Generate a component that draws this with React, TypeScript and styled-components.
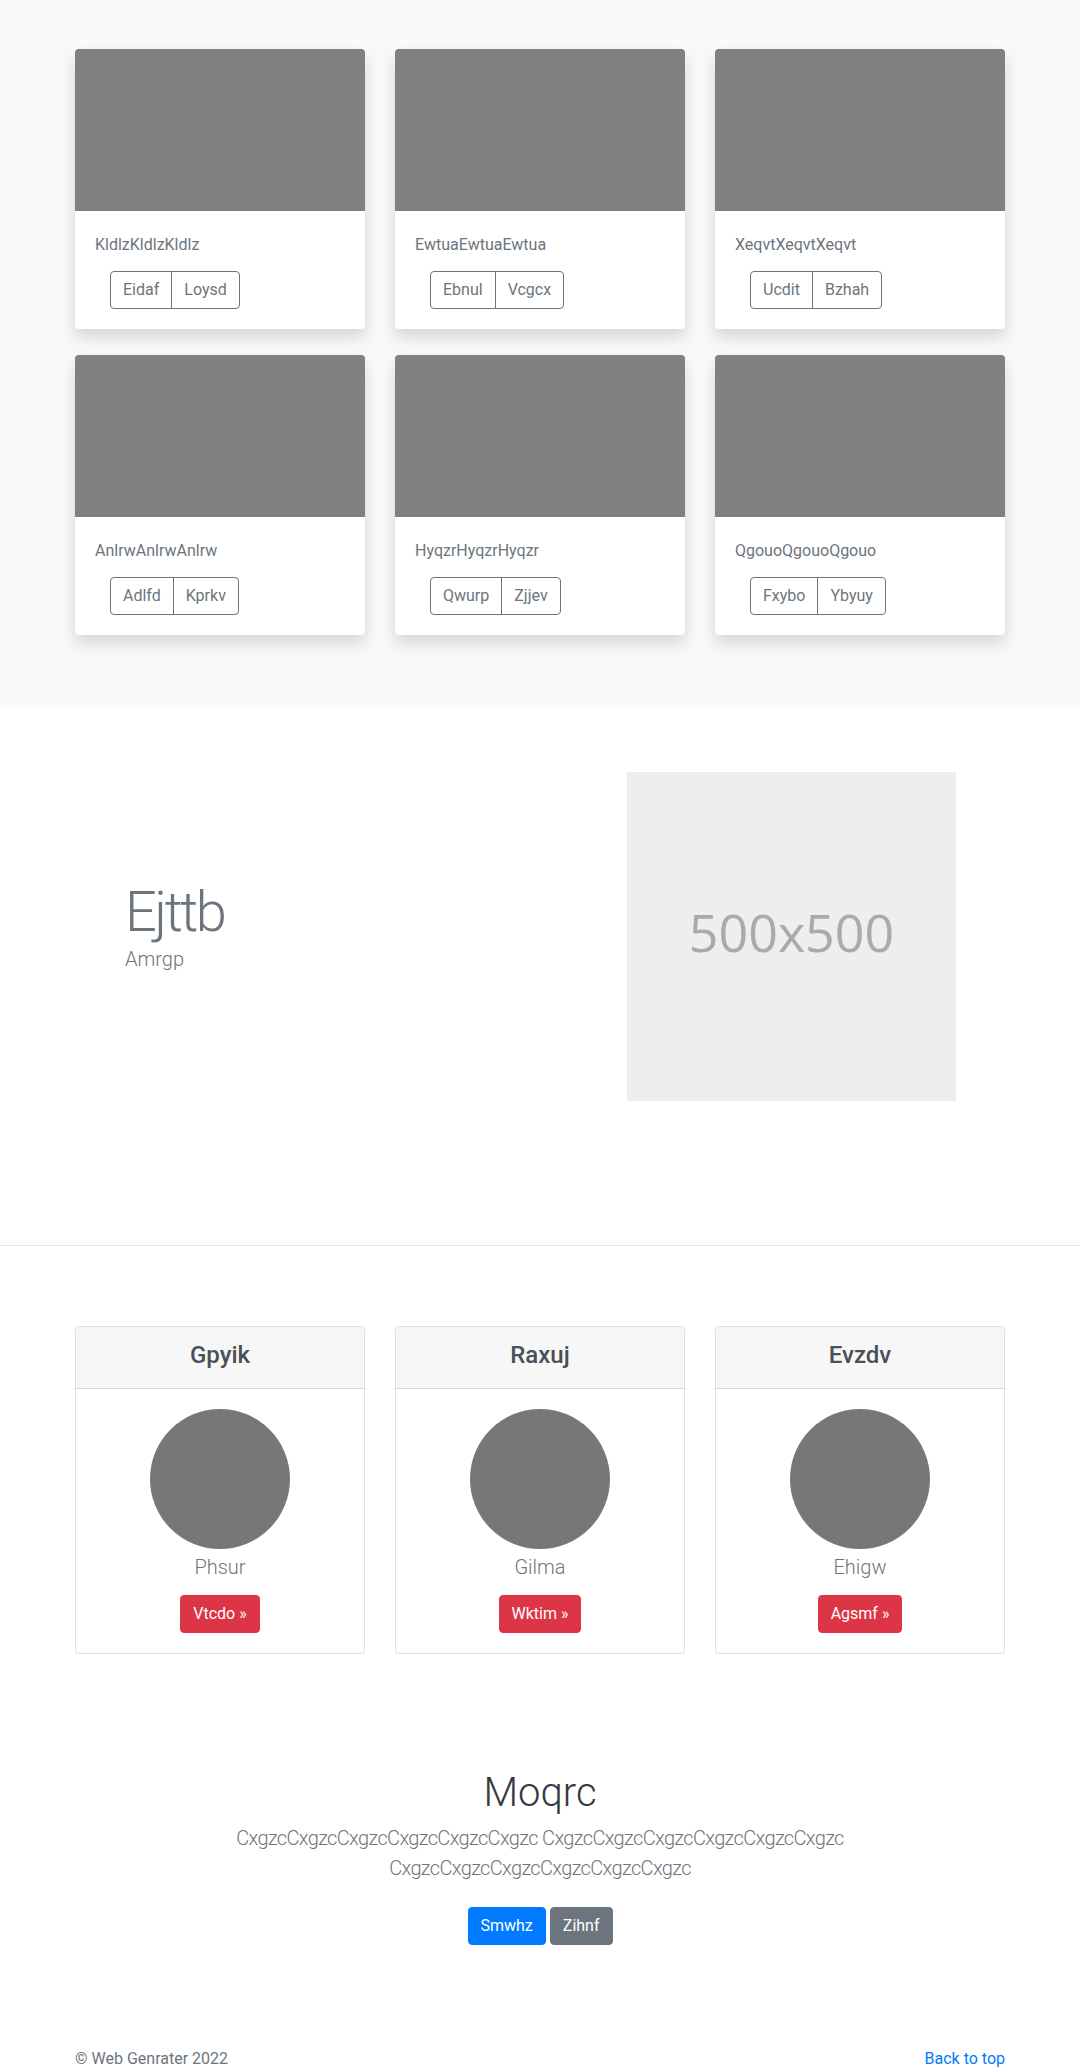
import React from "react";
import styled, { createGlobalStyle } from "styled-components";

const FONT = `Roboto, "Helvetica Neue", Arial, "Noto Sans", "Liberation Sans", sans-serif`;

const GlobalStyle = createGlobalStyle`
  *, *::before, *::after { box-sizing: border-box; }
  html, body { margin: 0; padding: 0; }
  body {
    font-family: ${FONT};
    font-size: 16px;
    line-height: 1.5;
    color: #212529;
    background: #fff;
  }
`;

const Container = styled.div`
  width: 930px;
  margin: 0 auto;
`;

/* ---------- Album section ---------- */
const AlbumSection = styled.section`
  background: #f8f9fa;
  padding: 49px 0 72px;
`;

const CardGrid = styled.div`
  display: grid;
  grid-template-columns: repeat(3, 290px);
  column-gap: 30px;
  row-gap: 26px;
`;

const ProductCard = styled.div`
  background: #fff;
  border-radius: 4px;
  box-shadow: 0 8px 16px rgba(0, 0, 0, 0.15);
  overflow: hidden;
  display: flex;
  flex-direction: column;
`;

const Thumb = styled.div`
  height: 162px;
  background: #808080;
`;

const CardBody = styled.div`
  padding: 20px;
`;

const CardText = styled.p`
  margin: 0 0 14px;
  padding-top: 2px;
  font-size: 16px;
  line-height: 24px;
  color: #6c757d;
`;

const BtnGroup = styled.div`
  display: inline-flex;
  margin-left: 15px;
`;

const OutlineBtn = styled.button<{ $first?: boolean }>`
  font-family: ${FONT};
  font-size: 16px;
  line-height: 24px;
  padding: 6px 12px;
  background: transparent;
  color: #6c757d;
  border: 1px solid #6c757d;
  border-radius: ${(p) => (p.$first ? "4px 0 0 4px" : "0 4px 4px 0")};
  margin-left: ${(p) => (p.$first ? "0" : "-1px")};
  cursor: pointer;
`;

/* ---------- Feature section ---------- */
const FeatureSection = styled.section`
  padding: 65px 0 144px;
  border-bottom: 1px solid #e5e5e5;
`;

const FeatureRow = styled.div`
  display: grid;
  grid-template-columns: 450px 450px;
  column-gap: 30px;
  padding: 0 15px;
`;

const FeatureText = styled.div`
  padding: 110px 0 0 35px;
`;

const DisplayTitle = styled.h1`
  margin: 0;
  font-size: 56px;
  font-weight: 300;
  line-height: 1.1;
  letter-spacing: -2.5px;
  color: #6c757d;
`;

const FeatureLead = styled.p`
  margin: 0;
  font-size: 20px;
  font-weight: 300;
  line-height: 30px;
  color: #6c757d;
`;

const Placeholder = styled.div`
  width: 329px;
  height: 329px;
  margin-left: 57px;
  padding-bottom: 10px;
  background: #eeeeee;
  color: #aaaaaa;
  font-family: "Open Sans", "Noto Sans", sans-serif;
  font-size: 52px;
  display: flex;
  align-items: center;
  justify-content: center;
`;

/* ---------- Team / pricing section ---------- */
const TeamSection = styled.section`
  padding: 80px 0 113px;
`;

const TeamGrid = styled.div`
  display: grid;
  grid-template-columns: repeat(3, 290px);
  column-gap: 30px;
`;

const TeamCard = styled.div`
  border: 1px solid rgba(0, 0, 0, 0.125);
  border-radius: 4px;
  overflow: hidden;
  text-align: center;
`;

const TeamHeader = styled.div`
  background: rgba(0, 0, 0, 0.03);
  border-bottom: 1px solid rgba(0, 0, 0, 0.125);
  padding: 12px 20px;
`;

const TeamName = styled.h4`
  margin: 0 0 6px;
  padding-top: 2px;
  font-size: 24px;
  font-weight: 500;
  line-height: 1.2;
  color: #495057;
`;

const TeamBody = styled.div`
  padding: 20px;
  display: flex;
  flex-direction: column;
  align-items: center;
`;

const Avatar = styled.div`
  width: 140px;
  height: 140px;
  border-radius: 50%;
  background: #777777;
`;

const Role = styled.p`
  margin: 0 0 13px;
  padding-top: 3px;
  font-size: 20px;
  font-weight: 300;
  line-height: 30px;
  color: #6c757d;
`;

const SolidBtn = styled.button<{ $tone: "danger" | "primary" | "secondary" }>`
  font-family: ${FONT};
  font-size: 16px;
  line-height: 24px;
  padding: 6px 12px;
  border: 1px solid
    ${(p) =>
      p.$tone === "danger" ? "#dc3545" : p.$tone === "primary" ? "#007bff" : "#6c757d"};
  background: ${(p) =>
    p.$tone === "danger" ? "#dc3545" : p.$tone === "primary" ? "#007bff" : "#6c757d"};
  color: #fff;
  border-radius: 4px;
  cursor: pointer;
`;

/* ---------- Jumbotron ---------- */
const Jumbotron = styled.section`
  text-align: center;
`;

const JumboTitle = styled.h1`
  margin: 0 0 6px;
  padding-top: 2px;
  font-size: 40px;
  font-weight: 300;
  line-height: 48px;
  color: #343a40;
`;

const JumboLead = styled.p`
  margin: 0 auto 16px;
  max-width: 700px;
  font-size: 20px;
  font-weight: 300;
  line-height: 30px;
  letter-spacing: -0.65px;
  color: #6c757d;
`;

const ActionRow = styled.div`
  display: flex;
  justify-content: center;
  gap: 4px;
  padding: 8px 0;
`;

/* ---------- Footer ---------- */
const Footer = styled.footer`
  padding-top: 94px;
  color: #6c757d;
`;

const FooterRow = styled.div`
  display: flex;
  justify-content: space-between;
  font-size: 16px;
  line-height: 24px;
`;

const FooterLink = styled.a`
  color: #007bff;
  text-decoration: none;
`;

const products = [
  { title: "KldlzKldlzKldlz", a: "Eidaf", b: "Loysd" },
  { title: "EwtuaEwtuaEwtua", a: "Ebnul", b: "Vcgcx" },
  { title: "XeqvtXeqvtXeqvt", a: "Ucdit", b: "Bzhah" },
  { title: "AnlrwAnlrwAnlrw", a: "Adlfd", b: "Kprkv" },
  { title: "HyqzrHyqzrHyqzr", a: "Qwurp", b: "Zjjev" },
  { title: "QgouoQgouoQgouo", a: "Fxybo", b: "Ybyuy" },
];

const team = [
  { name: "Gpyik", role: "Phsur", action: "Vtcdo" },
  { name: "Raxuj", role: "Gilma", action: "Wktim" },
  { name: "Evzdv", role: "Ehigw", action: "Agsmf" },
];

const word = "CxgzcCxgzcCxgzcCxgzcCxgzcCxgzc";

export default function App() {
  return (
    <>
      <GlobalStyle />
      <AlbumSection>
        <Container>
          <CardGrid>
            {products.map((p) => (
              <ProductCard key={p.title}>
                <Thumb />
                <CardBody>
                  <CardText>{p.title}</CardText>
                  <BtnGroup>
                    <OutlineBtn $first>{p.a}</OutlineBtn>
                    <OutlineBtn>{p.b}</OutlineBtn>
                  </BtnGroup>
                </CardBody>
              </ProductCard>
            ))}
          </CardGrid>
        </Container>
      </AlbumSection>

      <FeatureSection>
        <Container>
          <FeatureRow>
            <FeatureText>
              <DisplayTitle>Ejttb</DisplayTitle>
              <FeatureLead>Amrgp</FeatureLead>
            </FeatureText>
            <Placeholder>500x500</Placeholder>
          </FeatureRow>
        </Container>
      </FeatureSection>

      <TeamSection>
        <Container>
          <TeamGrid>
            {team.map((t) => (
              <TeamCard key={t.name}>
                <TeamHeader>
                  <TeamName>{t.name}</TeamName>
                </TeamHeader>
                <TeamBody>
                  <Avatar />
                  <Role>{t.role}</Role>
                  <SolidBtn $tone="danger">{t.action} »</SolidBtn>
                </TeamBody>
              </TeamCard>
            ))}
          </TeamGrid>
        </Container>
      </TeamSection>

      <Jumbotron>
        <Container>
          <JumboTitle>Moqrc</JumboTitle>
          <JumboLead>
            {word} {word} {word}
          </JumboLead>
          <ActionRow>
            <SolidBtn $tone="primary">Smwhz</SolidBtn>
            <SolidBtn $tone="secondary">Zihnf</SolidBtn>
          </ActionRow>
        </Container>
      </Jumbotron>

      <Footer>
        <Container>
          <FooterRow>
            <span>© Web Genrater 2022</span>
            <FooterLink href="#">Back to top</FooterLink>
          </FooterRow>
        </Container>
      </Footer>
    </>
  );
}
